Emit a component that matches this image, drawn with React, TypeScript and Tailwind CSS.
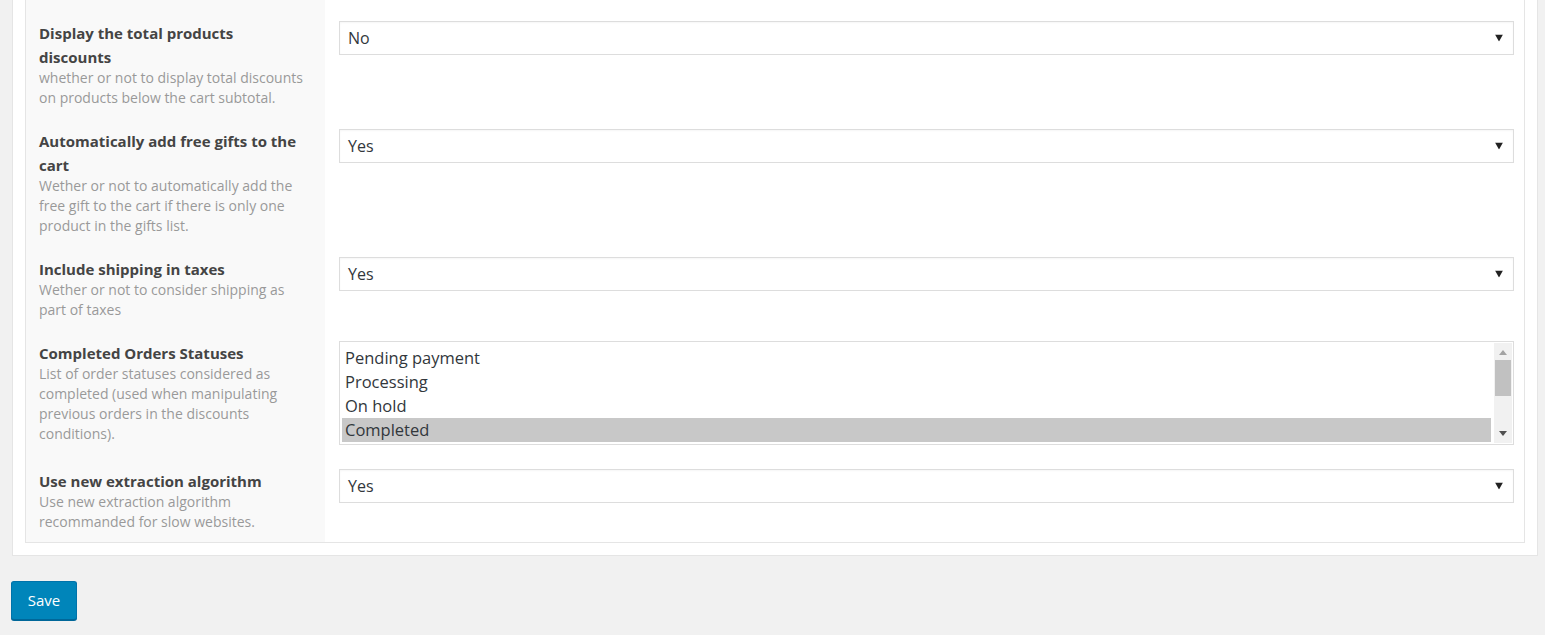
import { useState } from "react";

const rows = [
  {
    title: "Display the total products discounts",
    desc: "whether or not to display total discounts on products below the cart subtotal.",
    value: "No",
  },
  {
    title: "Automatically add free gifts to the cart",
    desc: "Wether or not to automatically add the free gift to the cart if there is only one product in the gifts list.",
    value: "Yes",
  },
  {
    title: "Include shipping in taxes",
    desc: "Wether or not to consider shipping as part of taxes",
    value: "Yes",
  },
];

const statuses = ["Pending payment", "Processing", "On hold", "Completed"];

function Caret() {
  return (
    <svg width="8" height="7" viewBox="0 0 8 7" className="absolute right-[10px] top-1/2 -translate-y-1/2">
      <path d="M0 0 H8 L4 7 Z" fill="#222" />
    </svg>
  );
}

function FakeSelect({ value }: { value: string }) {
  return (
    <div className="relative h-[34px] border border-[#ddd] bg-white shadow-[inset_0_1px_2px_rgba(0,0,0,0.04)] flex items-center pl-[8px] text-[16px] text-[#32373c]">
      {value}
      <Caret />
    </div>
  );
}

function Label({ title, desc }: { title: string; desc: string }) {
  return (
    <div className="w-[299px] shrink-0 bg-[#f9f9f9] pl-[13px] pr-[16px] pt-[11px] pb-[10px]">
      <div className="text-[15px] leading-[24px] font-bold text-[#444]">{title}</div>
      <div className="text-[14px] leading-[20px] -mt-px text-[#999]">{desc}</div>
    </div>
  );
}

function Listbox() {
  const [selected, setSelected] = useState("Completed");
  return (
    <div className="h-[104px] border border-[#ddd] bg-white flex p-px">
      <div className="flex-1 pt-[3px] pl-px pr-[3px]">
        {statuses.map((s) => (
          <div
            key={s}
            onClick={() => setSelected(s)}
            className={`h-[24px] leading-[24px] pl-[3px] text-[16.5px] text-[#32373c] ${
              selected === s ? "bg-[#c8c8c8]" : ""
            }`}
          >
            {s}
          </div>
        ))}
      </div>
      <div className="w-[18px] bg-[#f1f1f1] flex flex-col items-center">
        <svg width="8" height="5" viewBox="0 0 8 5" className="mt-[7px]">
          <path d="M0 5 L4 0 L8 5 Z" fill="#a3a3a3" />
        </svg>
        <div className="mt-[5px] w-[16px] h-[36px] bg-[#c1c1c1]" />
        <div className="flex-1" />
        <svg width="8" height="5" viewBox="0 0 8 5" className="mb-[7px]">
          <path d="M0 0 L8 0 L4 5 Z" fill="#505050" />
        </svg>
      </div>
    </div>
  );
}

export default function App() {
  return (
    <div
      className="min-h-[635px] bg-[#f1f1f1] pb-[16px]"
      style={{ fontFamily: '"Open Sans", "Noto Sans", sans-serif' }}
    >
      {/* Settings panel */}
      <div className="ml-[12px] mr-[7px] bg-white border-x border-b border-[#e5e5e5] px-[12px] pb-[12px] -mt-px">
        <div className="border-x border-b border-[#e5e5e5]">
          {rows.map((r, i) => (
            <div key={r.title} className={`flex ${i === 0 ? "bg-[linear-gradient(to_right,#f9f9f9_299px,white_299px)] pt-[11px]" : ""}`}>
              <Label title={r.title} desc={r.desc} />
              <div className="flex-1 pl-[14px] pr-[10px] pt-[11px] pb-[13px]">
                <FakeSelect value={r.value} />
              </div>
            </div>
          ))}

          <div className="flex">
            <Label
              title="Completed Orders Statuses"
              desc="List of order statuses considered as completed (used when manipulating previous orders in the discounts conditions)."
            />
            <div className="flex-1 pl-[14px] pr-[10px] pt-[11px] pb-[13px]">
              <Listbox />
            </div>
          </div>

          <div className="flex">
            <Label
              title="Use new extraction algorithm"
              desc="Use new extraction algorithm recommanded for slow websites."
            />
            <div className="flex-1 pl-[14px] pr-[10px] pt-[11px] pb-[13px]">
              <FakeSelect value="Yes" />
            </div>
          </div>
        </div>
      </div>

      <button className="ml-[11px] mt-[25px] w-[66px] h-[39px] rounded-[3px] bg-[#0085ba] border border-[#0073aa] border-b-[#006799] shadow-[0_1px_0_#006799] text-white text-[15px]">
        Save
      </button>
    </div>
  );
}
